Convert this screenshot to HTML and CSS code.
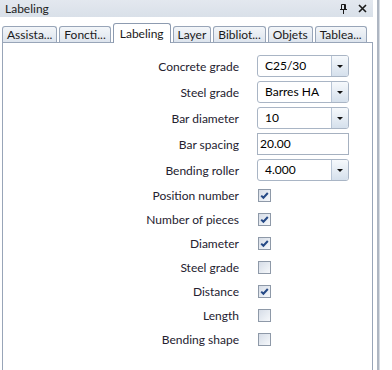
FILE: index.html
```html
<!DOCTYPE html>
<html lang="en">
  <head>
    <meta charset="UTF-8" />
    <meta name="viewport" content="width=device-width, initial-scale=1.0" />
    <title>Labeling</title>
    <link rel="stylesheet" href="styles.css">
  </head>
  <body>
    <div class="dock">
      <div class="pane">
        <div class="titlebar">
          <span class="title">Labeling</span>
          <div class="tb-icons">
            <svg width="7" height="10" viewBox="0 0 7 10">
              <path d="M1.5 0.5h4v5h-4z M0 5.5h7 M3.5 6v4" fill="none" stroke="#1a1a1a" stroke-width="1"/>
              <path d="M4.5 1v4.5" stroke="#1a1a1a" stroke-width="1"/>
            </svg>
            <svg width="9" height="9" viewBox="0 0 9 9">
              <path d="M1 1l7 7M8 1l-7 7" stroke="#1a1a1a" stroke-width="1.6"/>
            </svg>
          </div>
        </div>

        <div class="tabs">
          <div class="tab">Assista...</div>
          <div class="tab">Foncti...</div>
          <div class="tab tab-active">Labeling</div>
          <div class="tab">Layer</div>
          <div class="tab">Bibliot...</div>
          <div class="tab">Objets</div>
          <div class="tab">Tablea...</div>
        </div>

        <div class="panel">
          <div class="form">
            <label class="lbl">Concrete grade</label>
            <div class="combo"><span class="combo-val">C25/30</span><span class="drop"><i class="arrow"></i></span></div>

            <label class="lbl">Steel grade</label>
            <div class="combo"><span class="combo-val">Barres HA</span><span class="drop"><i class="arrow"></i></span></div>

            <label class="lbl">Bar diameter</label>
            <div class="combo"><span class="combo-val">10</span><span class="drop"><i class="arrow"></i></span></div>

            <label class="lbl">Bar spacing</label>
            <div class="textbox">20.00</div>

            <label class="lbl">Bending roller</label>
            <div class="combo"><span class="combo-val">4.000</span><span class="drop"><i class="arrow"></i></span></div>
          </div>

          <div class="checks">
            <label class="lbl">Position number</label>
            <span class="check checked"></span>
            <label class="lbl">Number of pieces</label>
            <span class="check checked"></span>
            <label class="lbl">Diameter</label>
            <span class="check checked"></span>
            <label class="lbl">Steel grade</label>
            <span class="check"></span>
            <label class="lbl">Distance</label>
            <span class="check checked"></span>
            <label class="lbl">Length</label>
            <span class="check"></span>
            <label class="lbl">Bending shape</label>
            <span class="check"></span>
          </div>
        </div>
      </div>
      <div class="splitter"></div>
    </div>
  </body>
</html>
```

FILE: styles.css
```css
html,
body {
  margin: 0;
  padding: 0;
  background: #fff;
  overflow: hidden;
}
body {
  width: 392px;
  height: 370px;
  font-family: Lato, "Noto Sans", sans-serif;
  font-size: 12px;
  color: #1a1a1a;
}
.dock {
  display: flex;
  height: 370px;
}
.pane {
  display: flex;
  flex-direction: column;
  width: 373px;
}
.titlebar {
  display: flex;
  align-items: center;
  justify-content: space-between;
  height: 17px;
  padding: 0 6px 0 5px;
  background: linear-gradient(#e3e8ef, #d9e0e9);
}
.title {
  color: #222;
}
.tb-icons {
  display: flex;
  align-items: center;
  gap: 11px;
}
.tabs {
  display: flex;
  align-items: flex-end;
  gap: 2px;
  height: 25px;
  padding-left: 2px;
}
.tab {
  height: 15px;
  padding: 0 4px;
  line-height: 15px;
  border: 1px solid #98a5b8;
  border-bottom: none;
  border-radius: 3px 3px 0 0;
  background: linear-gradient(#f3f6f9, #dde4ed);
  white-space: nowrap;
}
.tab-active {
  position: relative;
  z-index: 1;
  height: 19px;
  line-height: 19px;
  margin-bottom: -1px;
  padding: 0 6px;
  background: #fff;
  border-color: #8d9bb0;
}
.panel {
  flex: 1;
  margin-left: 2px;
  border: 1px solid #98a5b8;
  border-bottom: none;
  background: #fff;
}
.form {
  display: grid;
  grid-template-columns: 236px 92px;
  column-gap: 18px;
  row-gap: 4px;
  padding-top: 12px;
}
.lbl {
  text-align: right;
  align-self: center;
  color: #24212f;
}
.combo {
  display: flex;
  height: 20px;
  border: 1px solid #a9b5c5;
  border-radius: 3px;
  background: #fff;
  overflow: hidden;
}
.combo-val {
  flex: 1;
  padding-left: 7px;
  line-height: 20px;
  color: #000;
}
.drop {
  display: flex;
  align-items: center;
  justify-content: center;
  width: 16px;
  border-left: 1px solid #b8c5d6;
  background: linear-gradient(#f6f9fc, #d5e0ec);
}
.arrow {
  width: 0;
  height: 0;
  border-left: 3px solid transparent;
  border-right: 3px solid transparent;
  border-top: 3px solid #111;
}
.textbox {
  height: 20px;
  padding-left: 2px;
  line-height: 20px;
  border: 1px solid #a6b1c0;
  color: #000;
}
.checks {
  display: grid;
  grid-template-columns: 236px 13px;
  column-gap: 19px;
  grid-auto-rows: 24px;
  padding-top: 2px;
}
.check {
  align-self: center;
  box-sizing: border-box;
  width: 13px;
  height: 13px;
  border: 1px solid #8e99a8;
  background: linear-gradient(135deg, #d6dde7, #f6f8fb);
}
.check.checked {
  background:
    url("data:image/svg+xml,%3Csvg xmlns='http://www.w3.org/2000/svg' width='11' height='11'%3E%3Cpath d='M2.2 5.6l2.2 2.2L8.8 3' fill='none' stroke='%23264a86' stroke-width='2'/%3E%3C/svg%3E") center no-repeat,
    linear-gradient(135deg, #d6dde7, #f6f8fb);
}
.splitter {
  width: 2px;
  margin-left: 4px;
  background: #aeb6c2;
  border-right: 1px solid #d6dbe2;
}
```
